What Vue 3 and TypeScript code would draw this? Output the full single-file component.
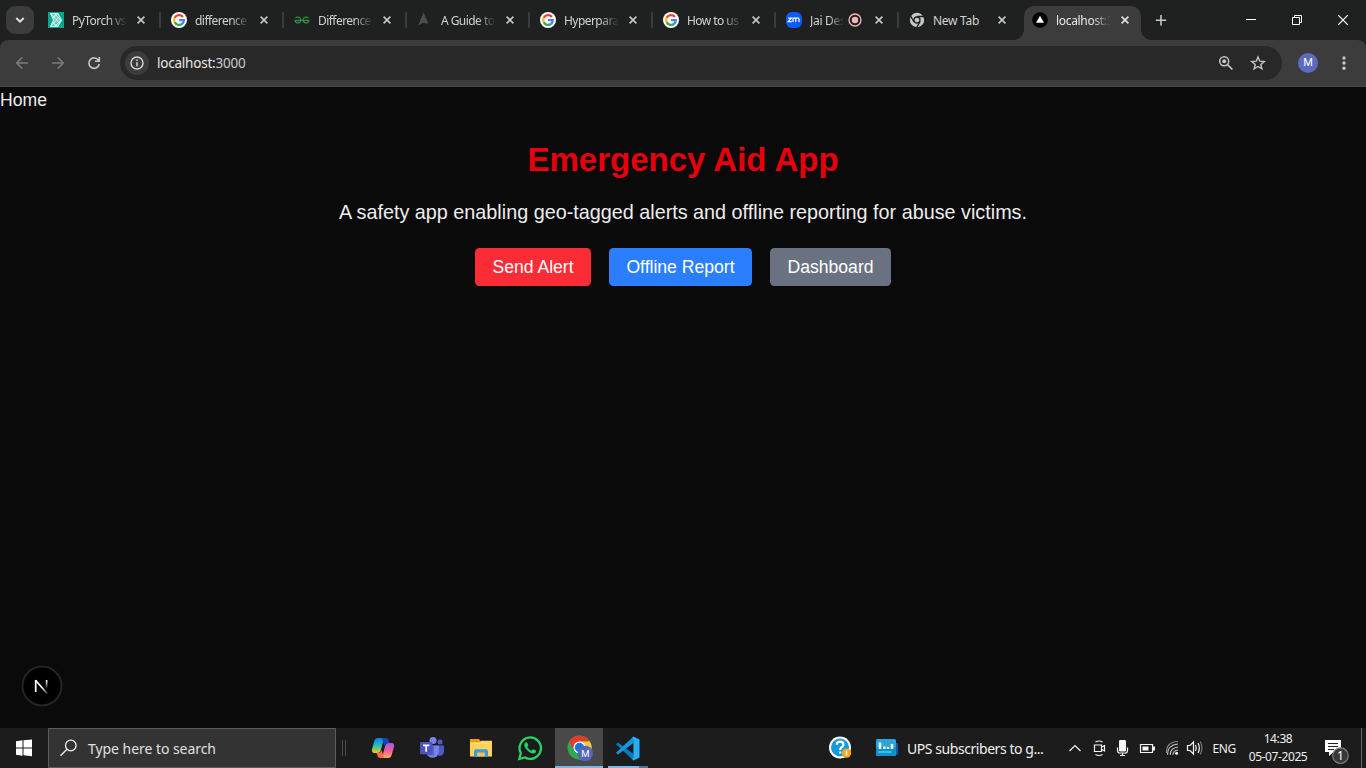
<script setup lang="ts">
interface Tab {
  title: string
  icon: 'torch' | 'google' | 'geeks' | 'arrow' | 'zoom' | 'chrome' | 'vercel'
  active?: boolean
  recording?: boolean
}

const tabs: Tab[] = [
  { title: 'PyTorch vs', icon: 'torch' },
  { title: 'difference', icon: 'google' },
  { title: 'Difference', icon: 'geeks' },
  { title: 'A Guide to', icon: 'arrow' },
  { title: 'Hyperpara', icon: 'google' },
  { title: 'How to us', icon: 'google' },
  { title: 'Jai Des', icon: 'zoom', recording: true },
  { title: 'New Tab', icon: 'chrome' },
  { title: 'localhost:3', icon: 'vercel', active: true },
]

const actions = [
  { label: 'Send Alert', tone: 'alert' },
  { label: 'Offline Report', tone: 'report' },
  { label: 'Dashboard', tone: 'dash' },
]
</script>

<template>
  <div class="screen">
    <header class="strip">
      <button class="tabsearch" aria-label="Search tabs">
        <svg width="28" height="28" viewBox="0 0 28 28"><path d="M10.3 12l3.7 3.7 3.7-3.7" fill="none" stroke="#e3e3e3" stroke-width="1.9" /></svg>
      </button>
      <div class="tabs">
        <div v-for="(t, i) in tabs" :key="i" class="cell">
          <div class="tab" :class="{ active: t.active }">
            <svg class="fav" width="16" height="16" viewBox="0 0 16 16">
              <g v-if="t.icon === 'torch'">
                <path d="M0 0h16v16H0z" fill="#0aa58f" />
                <path d="M2.500 1.500h7.500l3.500 6.500-3.500 6.500H2.500L5.500 8z" fill="#63cfba" />
                <path d="M2.500 1.500h7.500l3.500 6.500-3.500 6.500H2.500L5.500 8zM2.500 1.500l9 9.500M6.500 1.500l6.500 7M11.500 4.500l-9 10M13.500 8l-7 6.500M10 1.500L4.500 6M4.500 10.500L10 14.500" fill="none" stroke="#e4fff8" stroke-width=".9" />
              </g>
              <g v-else-if="t.icon === 'google'">
                <circle cx="8" cy="8" r="8" fill="#fff" />
                <g fill="none" stroke-width="2.3">
                  <path d="M11.9 5A4.9 4.9 0 0 0 3.7 5.8" stroke="#ea4335" />
                  <path d="M3.7 5.8a4.9 4.9 0 0 0 0 4.5" stroke="#fbbc05" />
                  <path d="M3.7 10.2a4.9 4.9 0 0 0 7.6 1.5" stroke="#34a853" />
                  <path d="M8.1 8.1h4.7a4.9 4.9 0 0 1-1.6 3.7" stroke="#4285f4" />
                </g>
              </g>
              <g v-else-if="t.icon === 'geeks'" fill="none" stroke="#2f9142" stroke-width="1.2">
                <path d="M1.500 5.900C3 4.400 6.800 4.800 6.800 8c0 3.600-5.300 4-5.700.4h13.800c-.4 3.600-5.700 3.200-5.700-.4 0-3.200 3.800-3.600 5.300-2.100" />
              </g>
              <g v-else-if="t.icon === 'arrow'">
                <path d="M6 .5L0 13.8l5.300 1.700z" fill="#151817" />
                <path d="M6.500 .3l5 11.400-5.300-.9L.8 14z" fill="#494d4c" />
              </g>
              <g v-else-if="t.icon === 'zoom'">
                <rect width="16" height="16" rx="6" fill="#0b5cff" />
                <path d="M2.200 6h3.300L2.300 9.500h3.500M7 10V7.100q0-1.300 1.300-1.300t1.400 1.300V10M9.700 7.100q0-1.300 1.600-1.300T13 7.100V10" fill="none" stroke="#fff" stroke-width="1.250" />
              </g>
              <g v-else-if="t.icon === 'chrome'">
                <circle cx="8" cy="8" r="7.200" fill="#c4c7c5" />
                <circle cx="8" cy="8" r="3" fill="#c4c7c5" stroke="#1f2120" stroke-width="1.300" />
                <path d="M8 4.500h7M5 9.800L1.600 4M11.100 9.700L7.700 15.400" stroke="#1f2120" stroke-width="1.300" />
              </g>
              <g v-else>
                <circle cx="8" cy="8" r="7.800" fill="#000" />
                <path d="M8 3.800l4 6.900H4z" fill="#fff" />
              </g>
            </svg>
            <span class="title" :class="{ short: t.recording, whole: t.icon === 'chrome' }">{{ t.title }}</span>
            <svg v-if="t.recording" class="rec" width="14" height="14" viewBox="0 0 14 14"><circle cx="7" cy="7" r="6" fill="none" stroke="#f2b8b5" stroke-width="1.300" /><circle cx="7" cy="7" r="3.200" fill="#f2b8b5" /></svg>
            <svg class="close" width="16" height="16" viewBox="0 0 16 16"><path d="M4.600 4.600l6.800 6.800M11.400 4.600l-6.800 6.800" :stroke="t.active ? '#e3e3e3' : '#c7c7c7'" stroke-width="1.600" /></svg>
          </div>
          <i v-if="i < 7" class="sep"></i>
        </div>
      </div>
      <svg class="plus" width="16" height="16" viewBox="0 0 16 16"><path d="M8 3v10.400M2.800 8.200h10.400" stroke="#c7c7c7" stroke-width="1.600" /></svg>
      <div class="winbtns">
        <svg width="46" height="40" viewBox="0 0 46 40"><path d="M18 19.500h10" stroke="#fff" /></svg>
        <svg width="46" height="40" viewBox="0 0 46 40"><path d="M18.500 17.500h7v7h-7zM20.500 17.500v-2h7v7h-2" fill="none" stroke="#fff" /></svg>
        <svg width="46" height="40" viewBox="0 0 46 40"><path d="M18.200 15.200l9.600 9.600M27.800 15.200l-9.600 9.600" stroke="#fff" stroke-width="1.200" /></svg>
      </div>
    </header>

    <div class="toolbarwrap">
      <nav class="toolbar">
        <svg width="36" height="24" viewBox="0 0 36 24"><path d="M28 12H17M22.200 6.500L16.700 12l5.500 5.500" fill="none" stroke="#7b7b7b" stroke-width="1.600" /></svg>
        <svg width="36" height="24" viewBox="0 0 36 24"><path d="M16 12h11M21.800 6.500l5.500 5.500-5.500 5.500" fill="none" stroke="#7b7b7b" stroke-width="1.600" /></svg>
        <svg width="36" height="24" viewBox="0 0 36 24"><path d="M26.500 9.400A5.200 5.200 0 1 0 27.200 13M27.300 6v4.200H23" fill="none" stroke="#c8c8c8" stroke-width="1.600" /></svg>
        <div class="omnibox">
          <span class="info">
            <svg width="16" height="16" viewBox="0 0 16 16"><circle cx="8" cy="8" r="6" fill="none" stroke="#d6d6d6" stroke-width="1.400" /><path d="M8 7.200v4M8 4.600V6" stroke="#d6d6d6" stroke-width="1.500" /></svg>
          </span>
          <span class="url">localhost:<em>3000</em></span>
          <svg class="mag" width="16" height="16" viewBox="0 0 16 16"><circle cx="6.200" cy="6.300" r="4.500" fill="none" stroke="#c7c7c7" stroke-width="1.500" /><circle cx="6.200" cy="6.300" r="2" fill="#c7c7c7" /><path d="M9.500 9.600l4.900 4.900" stroke="#c7c7c7" stroke-width="1.700" /></svg>
          <svg width="16" height="16" viewBox="0 0 16 16"><path d="M8 2l1.750 4.200 4.500.350-3.450 2.900 1.080 4.400L8 11.500l-3.880 2.350 1.080-4.400-3.450-2.900 4.500-.350z" fill="none" stroke="#c7c7c7" stroke-width="1.400" /></svg>
        </div>
        <span class="avatar">M</span>
        <svg class="dots" width="6" height="16" viewBox="0 0 6 16" fill="#c7c7c7"><circle cx="3" cy="3" r="1.700" /><circle cx="3" cy="8" r="1.700" /><circle cx="3" cy="13.200" r="1.700" /></svg>
      </nav>
    </div>

    <main class="page">
      <div class="home">Home</div>
      <h1>Emergency Aid App</h1>
      <p>A safety app enabling geo-tagged alerts and offline reporting for abuse victims.</p>
      <div class="actions">
        <button v-for="a in actions" :key="a.label" :class="a.tone">{{ a.label }}</button>
      </div>
      <div class="nextbadge">
        <svg width="42" height="42" viewBox="0 0 42 42">
          <defs>
            <linearGradient id="stem" x1="0" y1="0" x2="0" y2="1"><stop offset=".1" stop-color="#fff" /><stop offset="1" stop-color="#fff" stop-opacity="0" /></linearGradient>
            <linearGradient id="diag" gradientUnits="userSpaceOnUse" x1="22" y1="22" x2="27" y2="28"><stop offset="0" stop-color="#fff" /><stop offset="1" stop-color="#fff" stop-opacity=".2" /></linearGradient>
          </defs>
          <circle cx="21" cy="21" r="19.500" fill="#000" stroke="#252525" stroke-width="2" />
          <path d="M14.700 27V15" stroke="#fff" stroke-width="1.700" />
          <path d="M14.500 15.200l11.900 13.500" stroke="url(#diag)" stroke-width="1.700" />
          <rect x="24.800" y="15" width="1.600" height="9" fill="url(#stem)" />
        </svg>
      </div>
    </main>

    <footer class="taskbar">
      <svg class="start" width="48" height="40" viewBox="0 0 48 40"><path d="M16 13.200l6.500-.9v7.200H16zM23.500 12.200L32 11.500v8h-8.500zM16 20.500h6.500v7.200l-6.500-.9zM23.500 20.500H32V28.200l-8.500-.9z" fill="#fff" /></svg>
      <div class="search">
        <svg width="18" height="18" viewBox="0 0 18 18"><circle cx="10.800" cy="6.500" r="5.300" fill="none" stroke="#eee" stroke-width="1.300" /><path d="M7 10.300L.5 16.800" stroke="#eee" stroke-width="1.400" /></svg>
        <span>Type here to search</span>
      </div>
      <div class="grip"></div>
      <div class="apps">
        <div class="app">
          <svg width="24" height="24" viewBox="0 0 24 24">
            <defs>
              <linearGradient id="cpa" x1="0" y1="0" x2="0" y2="1"><stop offset="0" stop-color="#1878e8" /><stop offset=".4" stop-color="#17b4dc" /><stop offset=".7" stop-color="#6ec86b" /><stop offset="1" stop-color="#f0ca22" /></linearGradient>
              <linearGradient id="cpb" x1="0" y1="0" x2="0" y2="1"><stop offset="0" stop-color="#a75bea" /><stop offset=".5" stop-color="#ef5c9d" /><stop offset="1" stop-color="#ffae55" /></linearGradient>
            </defs>
            <path d="M7 2h8.300c-2.100 0-2.700 2-3.300 4l-2 7.500C9.300 16 8.500 17 6 17H4c-3 0-3.500-2-2.800-4.500l2-7C3.900 3 5 2 7 2z" fill="url(#cpa)" />
            <path d="M17 22H8.700c2.100 0 2.700-2 3.300-4l2-7.500C14.700 8 15.500 7 18 7h2c3 0 3.500 2 2.800 4.500l-2 7c-.7 2.500-1.800 3.500-3.800 3.500z" fill="url(#cpb)" />
            <path d="M11 2h4c1.500 0 2.200 1 2.700 2.800L18.400 7H17c-2 0-2.700 1.200-3.200 3L12.500 7z" fill="#1745b6" />
            <path d="M13 22H9c-1.500 0-2.200-1-2.700-2.800L5.600 17H7c2 0 2.700-1.200 3.200-3l1.300 3z" fill="#fb6b45" />
          </svg>
        </div>
        <div class="app">
          <svg width="24" height="24" viewBox="0 0 24 24">
            <circle cx="20" cy="6" r="2.500" fill="#5059c9" /><circle cx="13" cy="4.500" r="3.500" fill="#7b83eb" />
            <path d="M17 9.500h7V16a4.300 4.300 0 0 1-7 3z" fill="#5059c9" />
            <path d="M6.500 9.500h12.300v6.800a6.200 6.200 0 0 1-12.300 0z" fill="#7b83eb" />
            <path d="M6.500 9.500H14V19.500H7z" fill="#5a62c3" />
            <rect y="6" width="12.300" height="12.300" rx="1" fill="#4b53bc" />
            <path d="M3 9.300h6.400M6.200 9.300v6.500" stroke="#fff" stroke-width="1.700" />
          </svg>
        </div>
        <div class="app">
          <svg width="24" height="24" viewBox="0 0 24 24">
            <path d="M1 3h9l1.500 2.200V7H1z" fill="#e8a00c" /><path d="M1 6.200h9.500L12 4.700h11V20.500H1z" fill="#ffd25c" />
            <path d="M1 7.200h22V8H1z" fill="#ffdf83" />
            <path d="M5 21v-5.700q0-2 2-2h10q2 0 2 2V21h-3.500v-4.300h-7V21z" fill="#3e9bd9" /><path d="M8.500 16.700h7v3.800h-7z" fill="#f4c54f" />
          </svg>
        </div>
        <div class="app">
          <svg width="26" height="26" viewBox="0 0 26 26">
            <path d="M2.300 24l1.500-5.800A10.700 10.700 0 1 1 8 22.500z" fill="none" stroke="#25d366" stroke-width="2.300" />
            <path d="M9.200 7.200c-.6 0-2 1-1.900 3 .1 3 4.900 7.900 8.700 8.300 2 .1 3.100-1.200 3.100-2.500 0-.7-2.200-1.600-2.900-1.800-.7-.1-1.300 1.500-1.800 1.400-1.200-.3-3.700-2.500-4-3.700-.1-.5 1.100-1.200.9-1.900-.3-.9-1.200-2.800-2.100-2.800z" fill="#25d366" />
          </svg>
        </div>
        <div class="app current">
          <svg width="26" height="27" viewBox="0 0 26 27">
            <circle cx="12.500" cy="12.500" r="12" fill="#2da94f" />
            <path d="M2.100 6.500A12 12 0 0 1 22.900 6.500H12.500v6L7.300 15.500z" fill="#e33b2e" />
            <path d="M12.500 6.500h10.400A12 12 0 0 1 12.500 24.500l5.200-9z" fill="#fcc934" />
            <circle cx="12.500" cy="12.500" r="6" fill="#fff" /><circle cx="12.500" cy="12.500" r="4.700" fill="#1a73e8" />
            <circle cx="18.300" cy="18.500" r="7.700" fill="#5664bd" />
            <text x="18.300" y="21.800" text-anchor="middle" font-size="9.500" fill="#fff" font-family="Roboto, sans-serif">M</text>
          </svg>
        </div>
        <div class="app code">
          <svg width="25" height="25" viewBox="0 0 25 25">
            <path d="M1 8.200l2-1.700L18.500 18v6.500z" fill="#087cc1" /><path d="M1 16.800l2 1.700L18.500 7V.5z" fill="#1597df" />
            <path d="M18.500.5l6 2.900v18.200l-6 2.900-1-1.200.9-2.200V4l-1-2.400z" fill="#29aef5" />
          </svg>
        </div>
      </div>
      <div class="news">
        <svg width="26" height="26" viewBox="0 0 26 26">
          <circle cx="12" cy="12.500" r="11" fill="#fff" /><circle cx="12" cy="12.500" r="9" fill="#1599d8" />
          <path d="M8.700 9.700q.3-3 3.400-3 3.300 0 3.300 2.800 0 1.700-1.800 2.700-1.400.9-1.400 2.800M12.200 16.500v2" fill="none" stroke="#fff" stroke-width="2.200" />
          <circle cx="18.500" cy="18.100" r="4.700" fill="#f5a81c" /><path d="M18.500 15.500v5" stroke="#fff" stroke-width="1.500" />
        </svg>
        <svg class="tile" width="22" height="18" viewBox="0 0 22 18">
          <path d="M17 4h5v11q0 1-2 1h-3z" fill="#0b5ca8" /><rect width="20" height="17" rx="1.500" fill="#2aa7d8" /><path d="M0 8h20v7.500q0 1.500-1.500 1.500h-17Q0 17 0 15.500z" fill="#168fc8" />
          <path d="M4 3.500V10M8.300 7.500V10M12 8V10M16 5v5" stroke="#fff" stroke-width="2.500" /><path d="M2.500 13h13" stroke="#25d6ec" stroke-width="1.700" />
        </svg>
        <span>UPS subscribers to g...</span>
      </div>
      <div class="tray">
        <svg width="136" height="24" viewBox="0 0 136 24" fill="none" stroke="#f4f4f4" stroke-width="1.200">
          <path d="M1.500 15l5.500-5.500 5.500 5.500" />
          <path d="M26.500 9h7v6.500h-7zM33.500 11.200l3-1.700v5.500l-3-1.700M27.500 6q3.500-2 7 0M27.500 18.500q3.500 2 7 0" />
          <rect x="51" y="4" width="7" height="11.500" rx="1.200" fill="#f4f4f4" stroke="none" />
          <path d="M49.500 11.500v3q0 2.500 2.200 2.500h5.600q2.200 0 2.200-2.500v-3M54.500 17v2.500M52 19.500h5" />
          <path d="M72.500 8.500h12v8h-12z" /><path d="M74.500 10.500h6v4h-6z" fill="#f4f4f4" stroke="none" /><path d="M86 10.500v4" stroke-width="2" />
          <path d="M99.500 18.700Q99.500 9 110 8M102.300 18.700Q102.300 12 110 11M105 18.700q0-4 5-4.700" stroke="#c4c4c4" /><path d="M98.500 17Q98 6 110 5.500" stroke="#8b8b8b" /><circle cx="108.600" cy="17.300" r="1.500" fill="#f4f4f4" stroke="none" />
          <path d="M119.500 9.500h2.500l3.500-3.500v12l-3.500-3.500h-2.500zM127.500 9q1.600 3 0 6M130 7q2.700 5 0 10" /><path d="M132.300 5.500q3.200 6.500 0 13" stroke="#777" />
        </svg>
        <span class="lang">ENG</span>
        <div class="clock"><span>14:38</span><span>05-07-2025</span></div>
        <svg class="note" width="26" height="26" viewBox="0 0 26 26">
          <path d="M1 1h16v12H9.500L5 17v-4H1z" fill="#fff" /><path d="M4 4.500h10M4 7.500h10M4 10.500h6" stroke="#222" stroke-width="1.100" />
          <circle cx="16.500" cy="16.700" r="7.800" fill="#393939" stroke="#888" stroke-width="1.100" />
          <text x="16.500" y="20.900" text-anchor="middle" font-size="12" fill="#fff" font-family="Noto Sans, sans-serif">1</text>
        </svg>
        <i class="desk"></i>
      </div>
    </footer>
  </div>
</template>

<style>
html, body { margin: 0; background: #0a0a0a; overflow: hidden; }
</style>

<style scoped>
.screen { width: 1366px; height: 768px; display: flex; flex-direction: column; overflow: hidden; background: #0a0a0a; font-family: "Noto Sans", "Open Sans", sans-serif; }
.screen * { box-sizing: border-box; }
svg { display: block; flex: none; }
button { border: 0; padding: 0; font: inherit; }
.strip { height: 40px; flex: none; background: #1f2120; display: flex; }
.tabsearch { width: 28px; height: 28px; margin: 6px; border-radius: 9px; background: #3c3c3c; flex: none; }
.tabs { display: flex; }
.cell { width: 123px; flex: none; display: flex; padding-top: 6px; }
.tab { width: 117px; height: 34px; display: flex; align-items: center; padding: 0 8px; position: relative; border-radius: 10px 10px 0 0; }
.fav { margin-top: -6px; }
.title { width: 54px; margin: -5px 0 0 8px; font-size: 12px; line-height: 18px; letter-spacing: -.55px; color: #d2d2d2; white-space: nowrap; overflow: hidden; -webkit-mask-image: linear-gradient(90deg, #000 36px, transparent 55px); mask-image: linear-gradient(90deg, #000 36px, transparent 55px); }
.title.short { width: 33px; letter-spacing: -.28px; -webkit-mask-image: linear-gradient(90deg, #000 19px, transparent 34px); mask-image: linear-gradient(90deg, #000 19px, transparent 34px); }
.title.whole { letter-spacing: -.28px; -webkit-mask-image: none; mask-image: none; }
.rec { margin: -6px 0 0 5px; }
.close { margin: -6px 0 0 auto; }
.active { background: #3c3c3c; }
.active .title { color: #e8e8e8; letter-spacing: -.32px; }
.active::before, .active::after { content: ""; position: absolute; bottom: 0; width: 10px; height: 10px; }
.active::before { left: -10px; background: radial-gradient(circle at 0 0, transparent 9.5px, #3c3c3c 10px); }
.active::after { right: -10px; background: radial-gradient(circle at 100% 0, transparent 9.5px, #3c3c3c 10px); }
.sep { width: 2px; height: 16px; margin: 6px 0 0 2px; border-radius: 1px; background: #3c3c3c; }
.plus { margin: 12px 0 0 6px; }
.winbtns { display: flex; margin-left: auto; }

.toolbarwrap { height: 47px; flex: none; background: #1f2120; }
.toolbar { height: 47px; display: flex; align-items: center; padding-bottom: 1px; background: #3c3c3c; border-bottom: 1px solid #484848; border-radius: 8px 8px 0 0; }
.omnibox { width: 1162px; height: 34px; margin: 0 0 0 12px; display: flex; align-items: center; border-radius: 17px; background: #282828; padding: 0 16px 0 5px; }
.info { width: 24px; height: 24px; border-radius: 12px; background: #3c3c3c; display: grid; place-items: center; }
.url { margin-left: 8px; font-size: 13.5px; line-height: 20px; letter-spacing: -.22px; color: #e8e8e8; }
.url em { font-style: normal; color: #cbcbcb; }
.mag { margin: 0 16px 0 auto; }
.avatar { width: 20px; height: 20px; margin-left: 16px; border-radius: 50%; background: #5c6bc0; color: #fff; font: 400 11px/20px Roboto, sans-serif; text-align: center; }
.dots { margin-left: 23px; }

.page { height: 641px; flex: none; position: relative; font-family: "Liberation Sans", Arial, sans-serif; color: #ededed; text-align: center; }
.home { height: 26px; font-size: 17.6px; line-height: 26px; text-align: left; }
h1 { margin: 27px 0 0; font-size: 33px; line-height: 39px; font-weight: 700; color: #e7000b; }
p { margin: 18px 0 0; font-size: 19.8px; line-height: 30px; }
.actions { display: flex; justify-content: center; gap: 18px; margin-top: 21px; }
.actions button { height: 38px; border-radius: 4.4px; color: #fff; font-size: 17.6px; line-height: 38px; }
.alert { width: 116px; background: #fb2c36; }
.report { width: 143px; background: #2b7fff; }
.dash { width: 121px; background: #6a7282; }
.nextbadge { position: absolute; left: 21px; bottom: 21px; }

.taskbar { height: 40px; flex: none; display: flex; background: #1c1c1c; color: #f0f0f0; }
.search { width: 288px; border: 1px solid #5b5b5b; background: #333; display: flex; align-items: center; padding-left: 11px; }
.search span { margin-left: 10px; font-size: 14px; letter-spacing: -.05px; color: #e0e0e0; }
.grip { width: 4px; height: 16px; margin: 12px 12px 0 6px; border: solid #4a4a4a; border-width: 0 1px; }
.apps { display: flex; }
.app { width: 49px; display: grid; place-items: center; }
.app.current { width: 48px; margin-left: 1px; padding: 2px 0 0 2px; background: #494949; border-bottom: 2px solid #76b9ed; }
.app.code { width: 40px; margin-left: 5px; padding-right: 2px; background: linear-gradient(90deg, #76b9ed 31px, #4d7797 31px) bottom / 100% 2px no-repeat; }
.news { margin-left: 180px; display: flex; align-items: center; }
.tile { margin-left: 22px; }
.news span { margin-left: 9px; font-size: 14px; letter-spacing: -.44px; white-space: nowrap; }
.tray { margin-left: auto; display: flex; align-items: center; }
.lang { margin-left: 9px; font-size: 12px; letter-spacing: -.35px; }
.clock { width: 62px; margin-left: 11px; display: flex; flex-direction: column; align-items: center; font-size: 12px; line-height: 18px; letter-spacing: -.4px; white-space: nowrap; }
.note { margin: 8px 0 0 15px; }
.desk { width: 1px; height: 40px; margin: 0 4px 0 11px; background: #686868; }
</style>
